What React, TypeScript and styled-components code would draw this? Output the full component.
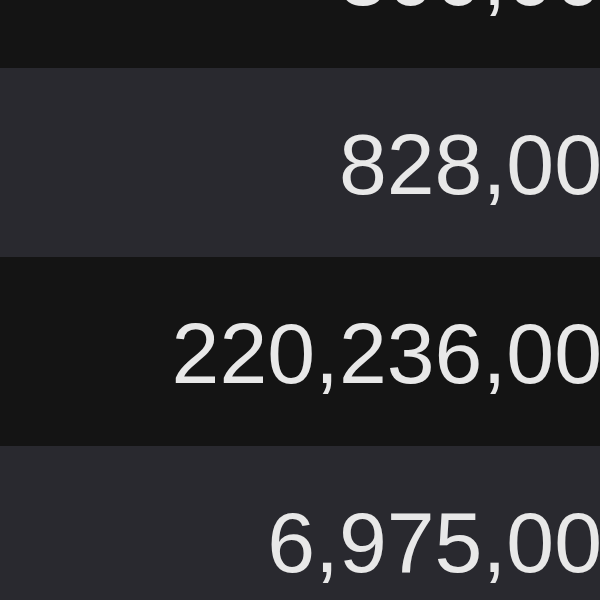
import React from "react"
import styled, {createGlobalStyle} from "styled-components"

const GlobalStyle = createGlobalStyle`
  html {
    overflow: hidden;
  }

  body {
    margin: 0;
    padding: 0;
    background: #141414;
  }
`

const amounts = ["300,00", "828,00", "220,236,00", "6,975,00"]

export default function App() {
    return (
        <>
            <GlobalStyle/>
            <Table>
                {amounts.map((amount, index) => (
                    <Row key={index} $striped={index % 2 === 1}>
                        <Amount>{amount}</Amount>
                    </Row>
                ))}
            </Table>
        </>
    )
}

const Table = styled.div`
  display: flex;
  flex-direction: column;
  width: 600px;
  margin-top: -121px;
`

const Row = styled.div<{ $striped: boolean }>`
  display: flex;
  align-items: center;
  justify-content: flex-end;
  height: 189px;
  flex-shrink: 0;
  background-color: ${p => p.$striped ? "#29292f" : "#141414"};
`

const Amount = styled.span`
  font-family: "Liberation Sans", Arial, sans-serif;
  font-size: 86px;
  line-height: 1;
  color: #e8e8e8;
  white-space: nowrap;
  margin-right: -2px;
  padding-top: 2px;
`
